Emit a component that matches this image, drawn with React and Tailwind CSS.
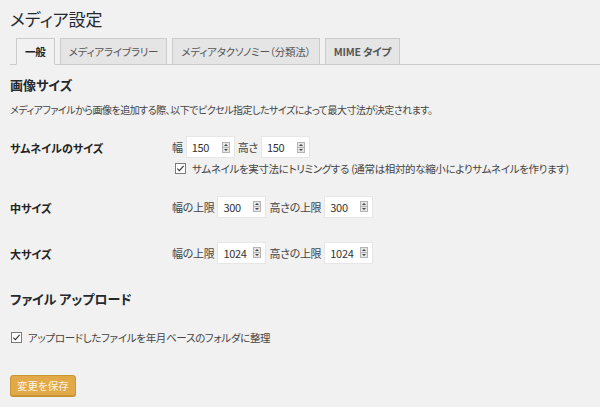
const font = { fontFamily: '"Noto Sans CJK JP", "Noto Sans", sans-serif' }

const Spinner = () => (
  <svg width="8" height="11" viewBox="0 0 8 11" className="shrink-0">
    <rect x="0.5" y="0.5" width="7" height="10" fill="#e6e6e6" stroke="#b4b4b4" />
    <line x1="1" y1="5.5" x2="7" y2="5.5" stroke="#b4b4b4" />
    <path d="M2 4 L4 2 L6 4 Z" fill="#444" />
    <path d="M2 7 L4 9 L6 7 Z" fill="#444" />
  </svg>
)

const NumberBox = ({ value }) => (
  <div className="flex h-[20px] w-[47px] items-center justify-between bg-white pl-[5px] pr-[4px] text-[11px] text-[#333] shadow-[0_0_0_1px_#e6e6e6]">
    <span>{value}</span>
    <Spinner />
  </div>
)

const Check = () => (
  <svg width="11" height="11" viewBox="0 0 11 11" className="shrink-0">
    <rect x="0.5" y="0.5" width="10" height="10" fill="#fff" stroke="#7a7a7a" />
    <path d="M2.3 5.6 L4.4 7.7 L8.6 2.9" fill="none" stroke="#333" strokeWidth="1.1" />
  </svg>
)

const tabs = ['一般', 'メディアライブラリー', 'メディアタクソノミー（分類法）', 'MIME タイプ']

const SizeRow = ({ label, w, h, limit, className }) => (
  <div className={`flex ${className}`}>
    <div className="w-[162px] pt-[3px] text-[11px] font-bold text-[#222]">{label}</div>
    <div className="flex items-center gap-[4px] text-[11px] tracking-[-0.3px] text-[#444]">
      <span>{limit ? '幅の上限' : '幅'}</span>
      <NumberBox value={w} />
      <span>{limit ? '高さの上限' : '高さ'}</span>
      <NumberBox value={h} />
    </div>
  </div>
)

export default function App() {
  return (
    <div className="min-h-[407px] w-[600px] bg-[#f1f1f1] [font-feature-settings:'palt']" style={font}>
      <div className="pl-[10px] pt-[7px]">
        <h1 className="text-[17px] leading-[24px] text-[#23282d]">メディア設定</h1>
      </div>
      <div className="ml-[10px] mt-[7px] flex gap-[5px] border-b border-[#cccccc] pl-[6px]">
        {tabs.map((t, i) => (
          <div
            key={t}
            className={`-mb-px h-[27px] border border-[#cccccc] px-[8px] pt-[5px] text-[10.5px] leading-[15px] tracking-[-0.2px] ${
              i === 0
                ? 'border-b-[#f1f1f1] bg-[#f1f1f1] font-bold text-[#222]'
                : 'bg-[#e5e5e5] text-[#555]'
            } ${i === 3 ? 'font-semibold' : ''}`}
          >
            {t}
          </div>
        ))}
      </div>

      <div className="px-[10px]">
        <h2 className="mt-[11px] text-[13px] font-bold leading-[18px] text-[#23282d]">画像サイズ</h2>
        <p className="mt-[9px] text-[10px] leading-[14px] tracking-[-0.5px] text-[#444]">
          メディアファイルから画像を追加する際、以下でピクセル指定したサイズによって最大寸法が決定されます。
        </p>

        <SizeRow label="サムネイルのサイズ" w="150" h="150" className="mt-[20px]" />
        <div className="ml-[162px] mt-[4px] flex items-center gap-[6px] pl-[3px] text-[10.5px] tracking-[-0.35px] text-[#444]">
          <Check />
          <span>サムネイルを実寸法にトリミングする (通常は相対的な縮小によりサムネイルを作ります)</span>
        </div>

        <SizeRow label="中サイズ" w="300" h="300" limit className="mt-[20px]" />
        <SizeRow label="大サイズ" w="1024" h="1024" limit className="mt-[26px]" />

        <h2 className="mt-[27px] text-[13px] font-bold leading-[18px] text-[#23282d]">ファイル アップロード</h2>

        <div className="mt-[22px] flex items-center gap-[6px] pl-[1px] text-[10.5px] tracking-[-0.3px] text-[#444]">
          <Check />
          <span>アップロードしたファイルを年月ベースのフォルダに整理</span>
        </div>

        <button className="mt-[29px] h-[21px] rounded-[3px] border border-[#c9962f] bg-[#e1a948] px-[6px] text-[10.5px] leading-[19px] text-[#fdf3e0] shadow-[0_1px_0_#c48f2c]">
          変更を保存
        </button>
      </div>
    </div>
  )
}
